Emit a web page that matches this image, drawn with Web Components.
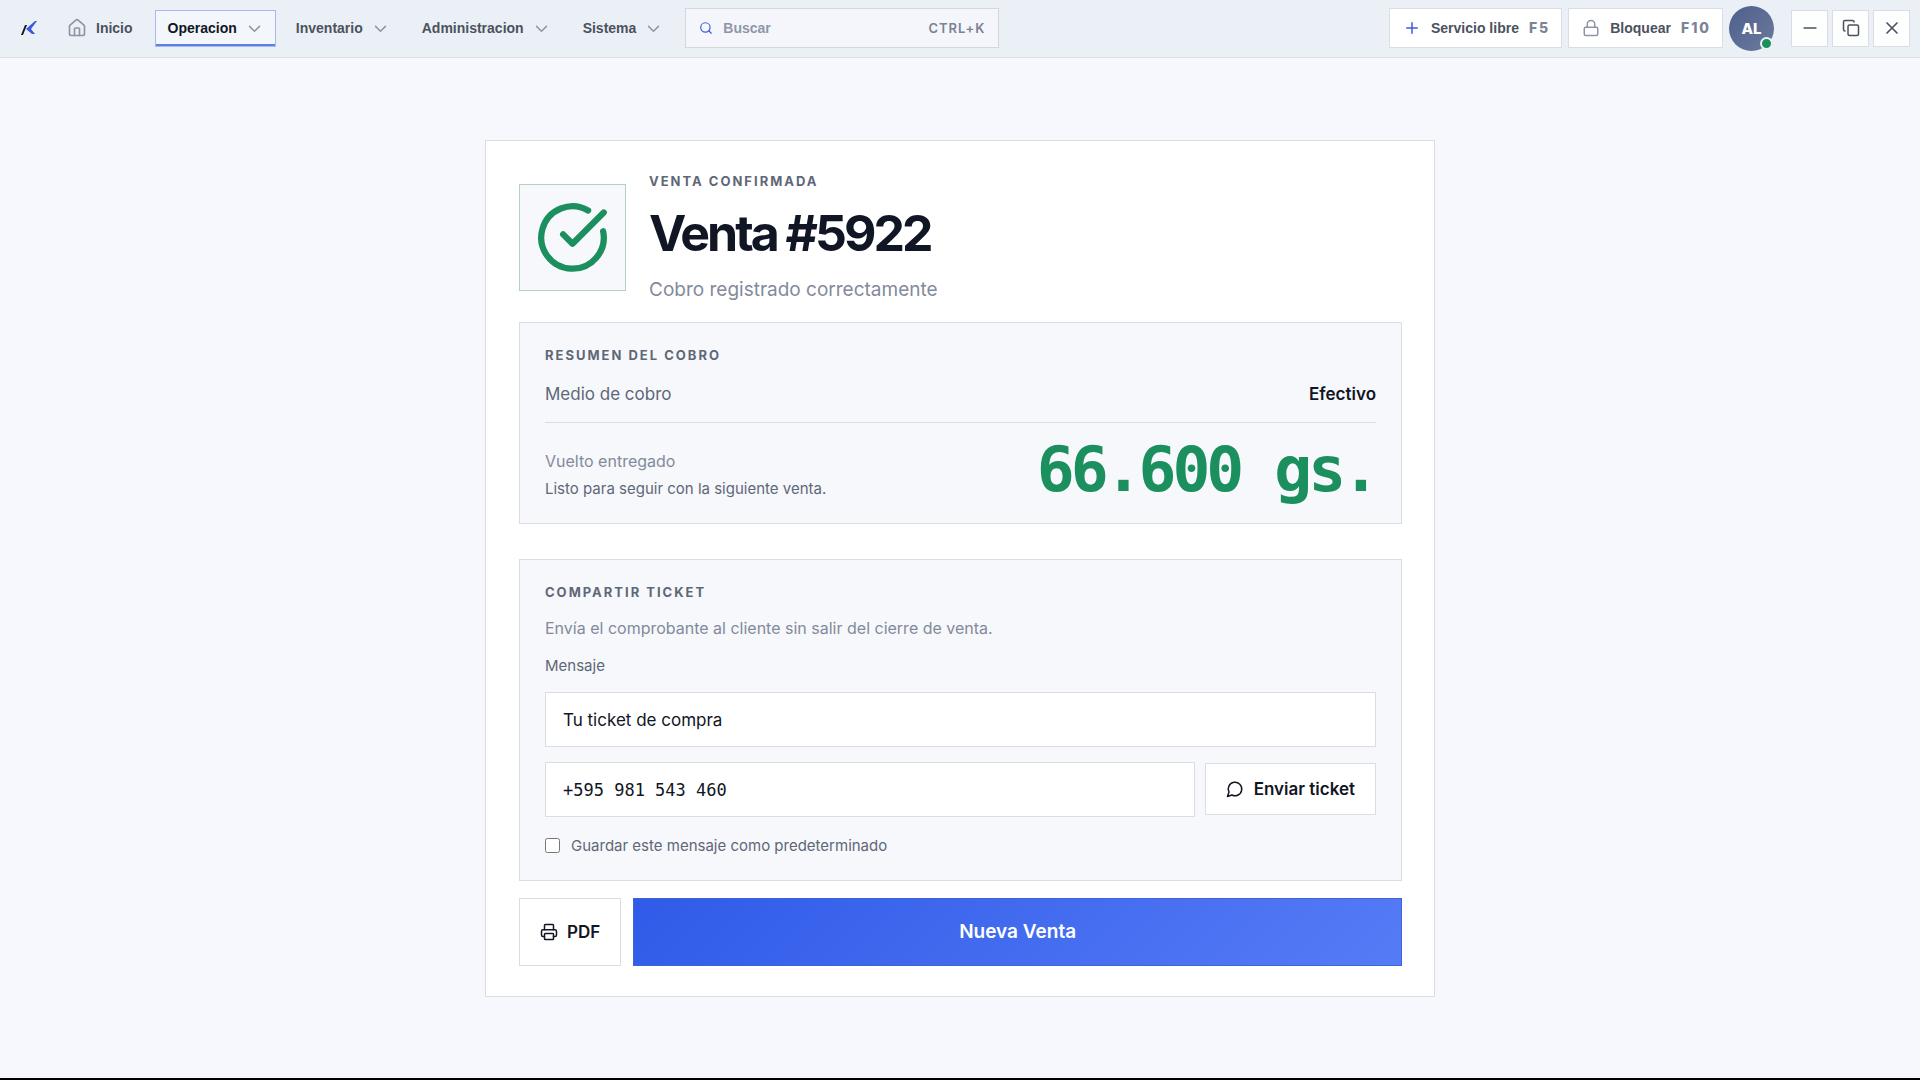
<!DOCTYPE html>
<html lang="es">
<head>
<meta charset="utf-8">
<meta name="viewport" content="width=device-width, initial-scale=1">
<title>Venta #5922</title>
<style>
    :root{
        --page: #f6f8fd;
        --panel: #f6f8fc;
        --line: #dadde4;
        --ink: #111624;
        --text: #5f6777;
        --muted: #838a9b;
        --blue: #3a5be0;
        --green: #1c8f5f;
        --sans: Inter, "Liberation Sans", sans-serif;
        --bar: "Liberation Sans", Arial, sans-serif;
        --mono: "DejaVu Sans Mono", "Liberation Mono", monospace;
    }
    body{
        margin: 0;
        background: var(--page);
        color: var(--ink);
        font-family: var(--sans);
    }
</style>
</head>
<body>
<pos-app></pos-app>

<script>
function html(strings, ...values) {
    const template = document.createElement('template')
    template.innerHTML = strings.reduce((out, s, i) => out + values[i - 1] + s)
    return template.content.cloneNode(true)
}

const icons = {
    home: '<path d="M3 10a2 2 0 0 1 .7-1.5l7-6a2 2 0 0 1 2.6 0l7 6A2 2 0 0 1 21 10v9a2 2 0 0 1-2 2H5a2 2 0 0 1-2-2z"/><path d="M15 21v-8a1 1 0 0 0-1-1h-4a1 1 0 0 0-1 1v8"/>',
    chevron: '<path d="m5 9 7 7 7-7"/>',
    search: '<circle cx="11" cy="11" r="8"/><path d="m21 21-4.3-4.3"/>',
    plus: '<path d="M5 12h14M12 5v14"/>',
    lock: '<rect x="3" y="11" width="18" height="11" rx="2"/><path d="M7 11V7a5 5 0 0 1 10 0v4"/>',
    minus: '<path d="M5 12h14"/>',
    copy: '<rect x="8" y="8" width="14" height="14" rx="2"/><path d="M4 16a2 2 0 0 1-2-2V4a2 2 0 0 1 2-2h10a2 2 0 0 1 2 2"/>',
    close: '<path d="M18 6 6 18M6 6l12 12"/>',
    check: '<path d="M21.8 10A10 10 0 1 1 17 3.335"/><path d="m9 11 3 3L22 4"/>',
    message: '<path d="M7.9 20A9 9 0 1 0 4 16.1L2 22z"/>',
    printer: '<path d="M6 18H4a2 2 0 0 1-2-2v-5a2 2 0 0 1 2-2h16a2 2 0 0 1 2 2v5a2 2 0 0 1-2 2h-2"/><path d="M6 9V3a1 1 0 0 1 1-1h10a1 1 0 0 1 1 1v6"/><rect x="6" y="14" width="12" height="8" rx="1"/>'
}

class posIcon extends HTMLElement {

    constructor() {
        super()

        this.attachShadow({ mode: 'open' })
    }

    connectedCallback() {
        const size = this.getAttribute('size') || 18
        const stroke = this.getAttribute('stroke') || 2
        this.shadowRoot.replaceChildren(html`
        <style>
            :host{ display: inline-flex; flex: none; }
            svg{ display: block; }
        </style>
        <svg width="${size}" height="${size}" viewBox="0 0 24 24" fill="none" stroke="currentColor" stroke-width="${stroke}" stroke-linecap="round" stroke-linejoin="round" aria-hidden="true">${icons[this.getAttribute('name')]}</svg>
        `)
    }

}

class posNavItem extends HTMLElement {

    constructor() {
        super()

        const menu = this.hasAttribute('menu')
        const tag = menu ? 'button' : 'a href="#"'
        const icon = this.getAttribute('icon')
        const shadow = this.attachShadow({ mode: 'open' })
        shadow.appendChild(html`
        <style>
            :host{ display: block; }
            a, button{
                box-sizing: border-box;
                display: flex;
                align-items: center;
                gap: 9px;
                height: 37px;
                padding: 0 12px;
                border: 1px solid transparent;
                background: none;
                color: #4b525d;
                font: bold 14px/20px var(--bar);
                text-decoration: none;
                cursor: pointer;
            }
            a{ padding-right: 14px; }
            :host([active]) button{
                border-color: #a9b8ee;
                background: #f3f7fc;
                color: var(--ink);
                box-shadow: inset 0 -2px #5f80e3;
            }
            pos-icon{ color: #8d95a3; }
        </style>
        <${tag}>
            ${icon ? `<pos-icon name="${icon}" size="20" stroke="2"></pos-icon>` : ''}
            <slot></slot>
            ${menu ? '<pos-icon name="chevron" size="17" stroke="2"></pos-icon>' : ''}
        </${menu ? 'button' : 'a'}>
        `)
    }

}

class posShortcut extends HTMLElement {

    constructor() {
        super()

        const shadow = this.attachShadow({ mode: 'open' })
        shadow.appendChild(html`
        <style>
            :host{ display: block; }
            button{
                box-sizing: border-box;
                display: flex;
                align-items: center;
                gap: 10px;
                height: 40px;
                padding: 0 11px 0 13px;
                border: 1px solid var(--line);
                background: #fff;
                color: #4b525d;
                font: bold 14px/20px var(--bar);
                cursor: pointer;
            }
            kbd{
                color: #7b8397;
                font: 800 14px/20px var(--sans);
                letter-spacing: 2px;
            }
            pos-icon{ color: var(--tint, #8d95a3); }
        </style>
        <button>
            <pos-icon name="${this.getAttribute('icon')}" size="18" stroke="2"></pos-icon>
            <slot></slot>
            <kbd>${this.getAttribute('key')}</kbd>
        </button>
        `)
    }

}

class posTopbar extends HTMLElement {

    constructor() {
        super()

        const shadow = this.attachShadow({ mode: 'open' })
        shadow.appendChild(html`
        <style>
            :host{
                display: block;
                background: #ebf0f7;
                border-bottom: 1px solid #d9dfe6;
            }
            header{
                box-sizing: border-box;
                display: flex;
                align-items: center;
                height: 57px;
                padding: 0 10px 1px 20px;
            }
            .logo{ display: block; margin-right: 16px; }
            nav{
                display: flex;
                gap: 7px;
            }
            .search{
                box-sizing: border-box;
                display: flex;
                align-items: center;
                gap: 10px;
                flex: 0 1 314px;
                min-width: 0;
                height: 40px;
                margin-left: 10px;
                padding: 0 13px;
                border: 1px solid #d3d7de;
                background: #f4f6fb;
                color: var(--blue);
            }
            .search input{
                flex: 1;
                min-width: 0;
                padding: 0;
                border: 0;
                outline: 0;
                background: none;
                color: var(--ink);
                font: bold 14px/20px var(--bar);
            }
            .search input::placeholder{ color: #8f96a8; opacity: 1; }
            .search kbd{
                color: #7b8291;
                font: 600 13px/20px var(--sans);
                letter-spacing: 1px;
            }
            .tools{
                display: flex;
                align-items: center;
                gap: 6px;
                margin-left: auto;
            }
            .plus{ --tint: var(--blue); }
            .avatar{
                position: relative;
                width: 45px;
                height: 45px;
                padding: 0;
                border: 0;
                border-radius: 50%;
                background: linear-gradient(135deg, #4d5f8c, #6d7a9c);
                color: #fff;
                font: 800 15px/45px var(--sans);
                cursor: pointer;
            }
            .avatar i{
                position: absolute;
                right: 1px;
                bottom: 1px;
                width: 9px;
                height: 9px;
                border: 2px solid #ebf0f7;
                border-radius: 50%;
                background: var(--green);
            }
            .window{
                display: flex;
                gap: 4px;
                margin-left: 11px;
            }
            .window button{
                box-sizing: border-box;
                display: flex;
                align-items: center;
                justify-content: center;
                width: 37px;
                height: 37px;
                padding: 0;
                border: 1px solid var(--line);
                background: #fdfefe;
                color: #4b525d;
                cursor: pointer;
            }
        </style>
        <header>
            <svg class="logo" width="18" height="16" viewBox="0 0 18 16" aria-hidden="true">
                <path d="M1 15 5 5h2L3 15z" fill="#111624"/>
                <path d="M17 1h-2L6 9l6 5h3l-4-5z" fill="#3a5be0"/>
            </svg>
            <nav>
                <pos-nav-item icon="home">Inicio</pos-nav-item>
                <pos-nav-item menu active>Operacion</pos-nav-item>
                <pos-nav-item menu>Inventario</pos-nav-item>
                <pos-nav-item menu>Administracion</pos-nav-item>
                <pos-nav-item menu>Sistema</pos-nav-item>
            </nav>
            <label class="search">
                <pos-icon name="search" size="14" stroke="2"></pos-icon>
                <input type="search" placeholder="Buscar" aria-label="Buscar">
                <kbd>CTRL+K</kbd>
            </label>
            <div class="tools">
                <pos-shortcut class="plus" icon="plus" key="F5">Servicio libre</pos-shortcut>
                <pos-shortcut icon="lock" key="F10">Bloquear</pos-shortcut>
                <button class="avatar">AL<i></i></button>
                <div class="window">
                    <button aria-label="Minimizar"><pos-icon name="minus" size="20"></pos-icon></button>
                    <button aria-label="Restaurar"><pos-icon name="copy" size="18"></pos-icon></button>
                    <button aria-label="Cerrar"><pos-icon name="close" size="20"></pos-icon></button>
                </div>
            </div>
        </header>
        `)
    }

}

class posPanel extends HTMLElement {

    constructor() {
        super()

        const shadow = this.attachShadow({ mode: 'open' })
        shadow.appendChild(html`
        <style>
            :host{
                display: block;
                padding: 23px 25px 24px;
                border: 1px solid var(--line);
                background: var(--panel);
            }
            h2{
                margin: 0;
                color: var(--text);
                font: 700 13px/18px var(--sans);
                letter-spacing: 2px;
                text-transform: uppercase;
            }
        </style>
        <h2>${this.getAttribute('heading')}</h2>
        <slot></slot>
        `)
    }

}

class saleSummary extends HTMLElement {

    constructor() {
        super()

        const shadow = this.attachShadow({ mode: 'open' })
        shadow.appendChild(html`
        <style>
            :host{ display: block; }
            .row{
                display: flex;
                justify-content: space-between;
                align-items: flex-end;
                gap: 24px;
            }
            .method{
                padding: 18px 0 16px;
                border-bottom: 1px solid var(--line);
                color: var(--text);
                font-size: 17px;
                line-height: 24px;
            }
            .method strong{ color: var(--ink); font-weight: 600; }
            .change{ padding-top: 18px; }
            .change p{ margin: 0; }
            .label{
                color: var(--muted);
                font-size: 16px;
                line-height: 24px;
            }
            .hint{
                padding-top: 6px;
                color: var(--text);
                font-size: 15px;
                line-height: 20px;
            }
            .amount{
                color: var(--green);
                font: bold 63px/58px var(--mono);
                letter-spacing: -4px;
                white-space: nowrap;
            }
        </style>
        <pos-panel heading="Resumen del cobro">
            <div class="row method">
                <span>Medio de cobro</span>
                <strong>Efectivo</strong>
            </div>
            <div class="row change">
                <div>
                    <p class="label">Vuelto entregado</p>
                    <p class="hint">Listo para seguir con la siguiente venta.</p>
                </div>
                <output class="amount">66.600 gs.</output>
            </div>
        </pos-panel>
        `)
    }

}

class shareTicket extends HTMLElement {

    constructor() {
        super()

        const shadow = this.attachShadow({ mode: 'open' })
        shadow.appendChild(html`
        <style>
            :host{ display: block; }
            form{
                display: flex;
                flex-direction: column;
                gap: 15px;
                padding-top: 15px;
            }
            p{
                margin: 0;
                color: var(--muted);
                font-size: 16px;
                line-height: 24px;
            }
            label{
                color: var(--text);
                font-size: 15px;
                line-height: 22px;
            }
            .field{
                box-sizing: border-box;
                width: 100%;
                height: 55px;
                padding: 2px 17px 0;
                border: 1px solid var(--line);
                border-radius: 0;
                background: #fff;
                color: var(--ink);
                font: 17px/24px var(--sans);
            }
            .send{
                display: flex;
                align-items: center;
                gap: 10px;
            }
            .phone{
                flex: 1;
                min-width: 0;
                font-family: var(--mono);
            }
            button{
                display: flex;
                align-items: center;
                gap: 10px;
                height: 52px;
                padding: 0 20px;
                border: 1px solid var(--line);
                background: #fff;
                color: var(--ink);
                font: 600 17px/24px var(--sans);
                cursor: pointer;
            }
            .save{
                display: flex;
                align-items: center;
                gap: 11px;
                padding-top: 4px;
                line-height: 20px;
            }
            .save input{
                width: 15px;
                height: 15px;
                margin: 0;
            }
        </style>
        <pos-panel heading="Compartir ticket">
            <form>
                <p>Envía el comprobante al cliente sin salir del cierre de venta.</p>
                <label for="message">Mensaje</label>
                <input class="field" id="message" type="text" value="Tu ticket de compra">
                <div class="send">
                    <input class="field phone" type="tel" aria-label="Telefono" value="+595 981 543 460">
                    <button type="button"><pos-icon name="message" size="18"></pos-icon>Enviar ticket</button>
                </div>
                <label class="save"><input type="checkbox">Guardar este mensaje como predeterminado</label>
            </form>
        </pos-panel>
        `)
    }

}

class saleDone extends HTMLElement {

    constructor() {
        super()

        const shadow = this.attachShadow({ mode: 'open' })
        shadow.appendChild(html`
        <style>
            :host{
                box-sizing: border-box;
                display: block;
                width: 100%;
                max-width: 950px;
                padding: 31px 32px 30px 33px;
                border: 1px solid var(--line);
                background: #fff;
            }
            .head{
                display: flex;
                align-items: center;
                gap: 23px;
            }
            .badge{
                box-sizing: border-box;
                display: flex;
                align-items: center;
                justify-content: center;
                width: 107px;
                height: 107px;
                border: 1px solid #b0d0c8;
                background: var(--panel);
                color: var(--green);
            }
            .titles{
                display: flex;
                flex-direction: column;
                gap: 19px;
            }
            p, h1{ margin: 0; }
            .eyebrow{
                color: var(--text);
                font: 700 13px/18px var(--sans);
                letter-spacing: 2px;
                text-transform: uppercase;
            }
            h1{
                font: 700 50px/48px var(--sans);
                letter-spacing: -3px;
            }
            .sub{
                color: var(--muted);
                font-size: 19px;
                line-height: 28px;
            }
            sale-summary{ margin-top: 18px; }
            share-ticket{ margin-top: 35px; }
            .actions{
                display: flex;
                gap: 12px;
                margin-top: 17px;
            }
            button{
                box-sizing: border-box;
                display: flex;
                align-items: center;
                justify-content: center;
                gap: 9px;
                height: 68px;
                padding: 0 20px;
                border: 1px solid var(--line);
                background: #fff;
                color: var(--ink);
                font: 600 17px/24px var(--sans);
                cursor: pointer;
            }
            .primary{
                flex: 1;
                border-color: #3f63dc;
                background: linear-gradient(135deg, #2f5be8, #567bf6);
                color: #fff;
                font-size: 19px;
            }
        </style>
        <div class="head">
            <div class="badge"><pos-icon name="check" size="75"></pos-icon></div>
            <div class="titles">
                <p class="eyebrow">Venta confirmada</p>
                <h1>Venta #5922</h1>
                <p class="sub">Cobro registrado correctamente</p>
            </div>
        </div>
        <sale-summary></sale-summary>
        <share-ticket></share-ticket>
        <div class="actions">
            <button><pos-icon name="printer" size="18"></pos-icon>PDF</button>
            <button class="primary">Nueva Venta</button>
        </div>
        `)
    }

}

class posApp extends HTMLElement {

    constructor() {
        super()

        const shadow = this.attachShadow({ mode: 'open' })
        shadow.appendChild(html`
        <style>
            :host{
                box-sizing: border-box;
                display: flex;
                flex-direction: column;
                min-height: 100vh;
                border-bottom: 2px solid #000;
            }
            main{
                flex: 1;
                display: flex;
                align-items: center;
                justify-content: center;
                padding: 24px;
            }
        </style>
        <pos-topbar></pos-topbar>
        <main>
            <sale-done></sale-done>
        </main>
        `)
    }

}

window.customElements.define('pos-icon', posIcon)
window.customElements.define('pos-nav-item', posNavItem)
window.customElements.define('pos-shortcut', posShortcut)
window.customElements.define('pos-topbar', posTopbar)
window.customElements.define('pos-panel', posPanel)
window.customElements.define('sale-summary', saleSummary)
window.customElements.define('share-ticket', shareTicket)
window.customElements.define('sale-done', saleDone)
window.customElements.define('pos-app', posApp)
</script>
</body>
</html>
